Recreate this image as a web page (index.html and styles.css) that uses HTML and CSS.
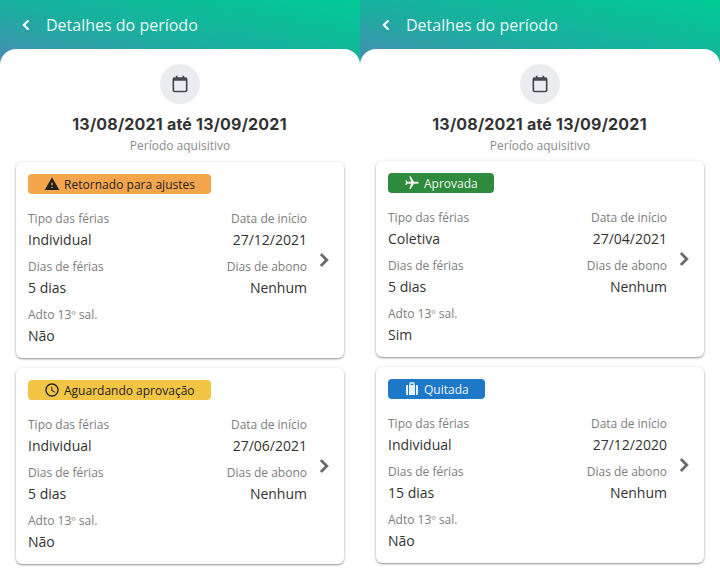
FILE: index.html
```html
<!DOCTYPE html>
<html lang="pt-BR">
<head>
    <meta charset="UTF-8">
    <title>Detalhes do período</title>
    <link rel="stylesheet" href="styles.css">
</head>
<body>
    <svg class="icon-defs" width="0" height="0">
        <symbol id="i-back" viewBox="0 0 24 24"><path d="M15.41 7.41L14 6l-6 6 6 6 1.41-1.41L10.83 12z"/></symbol>
        <symbol id="i-next" viewBox="0 0 24 24"><path d="M10 6L8.59 7.41 13.17 12l-4.58 4.59L10 18l6-6z"/></symbol>
        <symbol id="i-calendar" viewBox="0 0 24 24"><path d="M7 2h2v2h6V2h2v2h1.500A2.500 2.500 0 0 1 21 6.500v13a2.500 2.500 0 0 1-2.500 2.500h-13A2.500 2.500 0 0 1 3 19.500v-13A2.500 2.500 0 0 1 5.500 4H7zM5 8v11.500a.5.5 0 0 0 .5.5h13a.5.5 0 0 0 .5-.5V8z"/></symbol>
        <symbol id="i-warning" viewBox="0 0 24 24"><path d="M1 21h22L12 2 1 21zm12-3h-2v-2h2v2zm0-4h-2v-4h2v4z"/></symbol>
        <symbol id="i-clock" viewBox="0 0 24 24"><path d="M11.99 2C6.47 2 2 6.48 2 12s4.47 10 9.99 10C17.52 22 22 17.52 22 12S17.52 2 11.99 2zM12 20c-4.42 0-8-3.58-8-8s3.58-8 8-8 8 3.58 8 8-3.58 8-8 8zm.5-13H11v6l5.25 3.15.75-1.23-4.5-2.67z"/></symbol>
        <symbol id="i-flight" viewBox="0 0 24 24"><path transform="rotate(90 12 12)" d="M21 16v-2l-8-5V3.500c0-.83-.67-1.500-1.500-1.500S10 2.670 10 3.500V9l-8 5v2l8-2.500V19l-2 1.500V22l3.500-1 3.500 1v-1.500L13 19v-5.500l8 2.500z"/></symbol>
        <symbol id="i-case" viewBox="0 0 24 24"><path d="M8 6V4a2 2 0 0 1 2-2h4a2 2 0 0 1 2 2v2h3a2 2 0 0 1 2 2v11a2 2 0 0 1-2 2h-1V6h-1.500v15h-9V6H6v15H5a2 2 0 0 1-2-2V8a2 2 0 0 1 2-2zm2 0h4V4h-4z"/></symbol>
    </svg>

    <div class="screens">
        <section class="screen">
            <header class="topbar">
                <svg class="back-icon"><use href="#i-back"/></svg>
                <h1>Detalhes do período</h1>
            </header>
            <div class="sheet">
                <div class="period-icon"><svg><use href="#i-calendar"/></svg></div>
                <div class="period-dates">13/08/2021 até 13/09/2021</div>
                <div class="period-label">Período aquisitivo</div>

                <article class="card">
                    <div class="card-body">
                        <span class="chip chip-orange"><svg><use href="#i-warning"/></svg>Retornado para ajustes</span>
                        <div class="fields">
                            <div class="field"><span>Tipo das férias</span><b>Individual</b></div>
                            <div class="field end"><span>Data de início</span><b>27/12/2021</b></div>
                            <div class="field"><span>Dias de férias</span><b>5 dias</b></div>
                            <div class="field end"><span>Dias de abono</span><b>Nenhum</b></div>
                            <div class="field"><span>Adto 13º sal.</span><b>Não</b></div>
                        </div>
                    </div>
                    <svg class="next-icon"><use href="#i-next"/></svg>
                </article>

                <article class="card">
                    <div class="card-body">
                        <span class="chip chip-yellow"><svg><use href="#i-clock"/></svg>Aguardando aprovação</span>
                        <div class="fields">
                            <div class="field"><span>Tipo das férias</span><b>Individual</b></div>
                            <div class="field end"><span>Data de início</span><b>27/06/2021</b></div>
                            <div class="field"><span>Dias de férias</span><b>5 dias</b></div>
                            <div class="field end"><span>Dias de abono</span><b>Nenhum</b></div>
                            <div class="field"><span>Adto 13º sal.</span><b>Não</b></div>
                        </div>
                    </div>
                    <svg class="next-icon"><use href="#i-next"/></svg>
                </article>
            </div>
        </section>

        <section class="screen screen-tight">
            <header class="topbar">
                <svg class="back-icon"><use href="#i-back"/></svg>
                <h1>Detalhes do período</h1>
            </header>
            <div class="sheet">
                <div class="period-icon"><svg><use href="#i-calendar"/></svg></div>
                <div class="period-dates">13/08/2021 até 13/09/2021</div>
                <div class="period-label">Período aquisitivo</div>

                <article class="card">
                    <div class="card-body">
                        <span class="chip chip-green"><svg><use href="#i-flight"/></svg>Aprovada</span>
                        <div class="fields">
                            <div class="field"><span>Tipo das férias</span><b>Coletiva</b></div>
                            <div class="field end"><span>Data de início</span><b>27/04/2021</b></div>
                            <div class="field"><span>Dias de férias</span><b>5 dias</b></div>
                            <div class="field end"><span>Dias de abono</span><b>Nenhum</b></div>
                            <div class="field"><span>Adto 13º sal.</span><b>Sim</b></div>
                        </div>
                    </div>
                    <svg class="next-icon"><use href="#i-next"/></svg>
                </article>

                <article class="card">
                    <div class="card-body">
                        <span class="chip chip-blue"><svg><use href="#i-case"/></svg>Quitada</span>
                        <div class="fields">
                            <div class="field"><span>Tipo das férias</span><b>Individual</b></div>
                            <div class="field end"><span>Data de início</span><b>27/12/2020</b></div>
                            <div class="field"><span>Dias de férias</span><b>15 dias</b></div>
                            <div class="field end"><span>Dias de abono</span><b>Nenhum</b></div>
                            <div class="field"><span>Adto 13º sal.</span><b>Não</b></div>
                        </div>
                    </div>
                    <svg class="next-icon"><use href="#i-next"/></svg>
                </article>
            </div>
        </section>
    </div>
</body>
</html>
```

FILE: styles.css
```css
html, body {
    margin: 0;
    padding: 0;
    height: 100%;
    overflow: hidden;
}

body {
    font-family: "Open Sans", sans-serif;
    background: #fff;
}

.icon-defs {
    display: none;
}

.screens {
    display: flex;
    height: 570px;
}

.screen {
    width: 360px;
    flex-shrink: 0;
    overflow: hidden;
    background: linear-gradient(to top right, #4f87b8 0%, #1bae9f 45%, #00cb94 100%) top / 100% 70px no-repeat;
}

.topbar {
    display: flex;
    align-items: center;
    height: 49px;
    padding-left: 16px;
    box-sizing: border-box;
    color: #fff;
}

.back-icon {
    width: 20px;
    height: 20px;
    fill: #fff;
    stroke: #fff;
    stroke-width: 0.8;
    margin-right: 10px;
}

.topbar h1 {
    margin: 0;
    font-size: 16px;
    font-weight: 400;
    color: #eaf8f5;
}

.sheet {
    height: 521px;
    padding: 15px 16px 0;
    box-sizing: border-box;
    background: #fff;
    border-radius: 16px 16px 0 0;
}

.period-icon {
    width: 40px;
    height: 40px;
    margin: 0 auto;
    display: flex;
    align-items: center;
    justify-content: center;
    border-radius: 50%;
    background: #ecedf1;
}

.period-icon svg {
    width: 20px;
    height: 20px;
    fill: #454a50;
}

.period-dates {
    margin-top: 8px;
    padding-right: 1px;
    font-family: Inter, sans-serif;
    font-size: 16px;
    line-height: 24px;
    font-weight: 700;
    letter-spacing: 0.2px;
    text-align: center;
    color: #333;
}

.period-label {
    margin-top: 1px;
    margin-bottom: 8px;
    font-size: 12px;
    line-height: 17px;
    text-align: center;
    color: #8c8c8c;
}

.screen-tight .period-label {
    margin-bottom: 7px;
}

.card {
    display: flex;
    align-items: center;
    height: 196px;
    margin-bottom: 10px;
    padding-right: 7px;
    box-sizing: border-box;
    background: #fff;
    border-radius: 6px;
    box-shadow: 0 1px 2px rgba(0, 0, 0, 0.4), 0 0 4px rgba(0, 0, 0, 0.08);
}

.card-body {
    flex: 1;
    align-self: flex-start;
    padding: 12px 0 0 12px;
}

.chip {
    display: inline-flex;
    align-items: center;
    gap: 4px;
    height: 20px;
    padding: 0 16px;
    border-radius: 4px;
    font-size: 12px;
}

.chip svg {
    width: 16px;
    height: 16px;
    fill: currentColor;
}

.chip-orange {
    background: #f5a54c;
    color: #222;
    letter-spacing: 0.03px;
}

.chip-yellow {
    background: #f2c544;
    color: #222;
}

.chip-green {
    background: #2e8a3c;
    color: #eef6ef;
}

.chip-blue {
    background: #1e78c8;
    color: #e8f2fa;
}

.fields {
    display: grid;
    grid-template-columns: 1fr 1fr;
    row-gap: 6px;
    margin-top: 13px;
}

.field {
    display: flex;
    flex-direction: column;
}

.field.end {
    text-align: right;
}

.field span {
    font-size: 12px;
    line-height: 18px;
    color: #7d7d7d;
}

.field b {
    font-size: 14px;
    line-height: 24px;
    font-weight: 400;
    color: #333;
}

.next-icon {
    width: 26px;
    height: 26px;
    flex-shrink: 0;
    margin-left: 4px;
    fill: #666;
    stroke: #666;
    stroke-width: 0.7;
}
```
